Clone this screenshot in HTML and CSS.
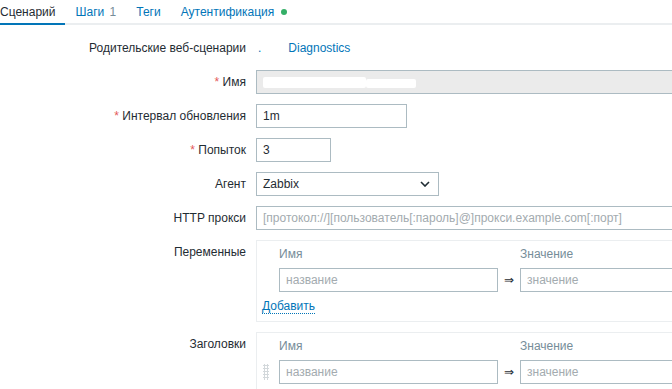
FILE: index.html
```html
<!DOCTYPE html>
<html>
<head>
  <title>Веб-сценарий</title>
  <link rel="stylesheet" href="styles.css">
</head>
<body>
  <ul class="tabs">
    <li class="tab active">Сценарий</li>
    <li class="tab">Шаги <span class="count">1</span></li>
    <li class="tab">Теги</li>
    <li class="tab">Аутентификация <span class="dot"></span></li>
  </ul>

  <div class="form-grid">
    <div class="label">Родительские веб-сценарии</div>
    <div class="field plain"><span class="host">.</span><a class="link">Diagnostics</a></div>

    <div class="label"><span class="req">*</span> Имя</div>
    <div class="field">
      <div class="input readonly wide"><span class="blank"></span><span class="blank small"></span></div>
    </div>

    <div class="label"><span class="req">*</span> Интервал обновления</div>
    <div class="field"><div class="input interval">1m</div></div>

    <div class="label"><span class="req">*</span> Попыток</div>
    <div class="field"><div class="input retries">3</div></div>

    <div class="label">Агент</div>
    <div class="field">
      <div class="input select">
        <span>Zabbix</span>
        <svg width="10" height="6" viewBox="0 0 10 6"><path d="M1 1l4 4 4-4" fill="none" stroke="#1f2c33" stroke-width="1.6"/></svg>
      </div>
    </div>

    <div class="label">HTTP прокси</div>
    <div class="field"><div class="input wide placeholder">[протокол://][пользователь[:пароль]@]прокси.example.com[:порт]</div></div>

    <div class="label">Переменные</div>
    <div class="field">
      <div class="kv-box">
        <div class="kv-head"><span></span><span>Имя</span><span></span><span>Значение</span></div>
        <div class="kv-row">
          <span></span>
          <div class="input placeholder">название</div>
          <span class="arrow">⇒</span>
          <div class="input placeholder">значение</div>
        </div>
        <a class="add">Добавить</a>
      </div>
    </div>

    <div class="label">Заголовки</div>
    <div class="field">
      <div class="kv-box">
        <div class="kv-head"><span></span><span>Имя</span><span></span><span>Значение</span></div>
        <div class="kv-row">
          <span class="handle"></span>
          <div class="input placeholder">название</div>
          <span class="arrow">⇒</span>
          <div class="input placeholder">значение</div>
        </div>
      </div>
    </div>
  </div>
</body>
</html>
```

FILE: styles.css
```css
body {
  margin: 0;
  width: 672px;
  height: 389px;
  overflow: hidden;
  font-family: "Liberation Sans", Arial, sans-serif;
  font-size: 12px;
  color: #1f2c33;
  background: #fff;
}
.tabs {
  display: flex;
  list-style: none;
  margin: 0 0 0 -10px;
  padding: 0;
  border-bottom: 2px solid #ebeef0;
}
.tab {
  padding: 5px 10px 4px;
  line-height: 14px;
  color: #0275b8;
  border-bottom: 2px solid transparent;
  margin-bottom: -2px;
}
.tab.active {
  color: #1f2c33;
  border-bottom-color: #0275b8;
}
.count {
  color: #768d99;
  margin-left: 2px;
}
.dot {
  display: inline-block;
  width: 6px;
  height: 6px;
  border-radius: 50%;
  background: #34af67;
  margin-left: 3px;
  vertical-align: 1px;
}
.form-grid {
  display: grid;
  grid-template-columns: 246px 1fr;
  column-gap: 10px;
  row-gap: 10px;
  padding-top: 11px;
}
.label {
  text-align: right;
  line-height: 24px;
  white-space: nowrap;
}
.req {
  color: #e45959;
}
.field {
  min-width: 0;
}
.field.plain {
  line-height: 24px;
}
.host {
  color: #0275b8;
  margin-left: 2px;
}
.link {
  color: #0275b8;
  margin-left: 27px;
}
.input {
  box-sizing: border-box;
  height: 24px;
  line-height: 22px;
  border: 1px solid #acbbc2;
  padding: 0 6px;
  background: #fff;
  white-space: nowrap;
  overflow: hidden;
}
.readonly {
  background: #ebebeb;
  display: flex;
  align-items: center;
}
.blank {
  display: inline-block;
  width: 103px;
  height: 11px;
  background: #fff;
  border-radius: 2px;
}
.blank.small {
  width: 50px;
  height: 9px;
  margin-top: 2px;
}
.wide {
  width: 460px;
}
.interval {
  width: 151px;
}
.retries {
  width: 75px;
}
.select {
  width: 183px;
  display: flex;
  align-items: center;
  justify-content: space-between;
  padding-right: 8px;
}
.placeholder {
  color: #a3abaf;
}
.kv-box {
  width: 460px;
  border: 1px solid #ebeef0;
  padding: 5px;
}
.kv-head,
.kv-row {
  display: grid;
  grid-template-columns: 17px 219px 22px 219px;
}
.kv-head {
  line-height: 16px;
  color: #768d99;
  margin-bottom: 6px;
}
.arrow {
  text-align: center;
  line-height: 24px;
}
.handle {
  width: 6px;
  height: 16px;
  margin: 4px 0 0 1px;
  background-image: radial-gradient(circle, #d3d8db 1px, transparent 1.2px);
  background-size: 3px 3px;
}
.add {
  display: inline-block;
  margin-top: 7px;
  margin-bottom: 2px;
  line-height: 14px;
  color: #0275b8;
  border-bottom: 1px dotted #0275b8;
}
```
